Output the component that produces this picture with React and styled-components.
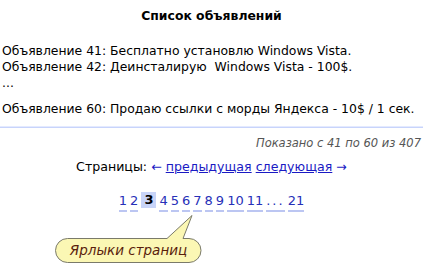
import React from "react";
import styled, { createGlobalStyle } from "styled-components";

const Global = createGlobalStyle`
  html, body { margin: 0; padding: 0; background: #fff; }
  body { font-family: "DejaVu Sans", Verdana, sans-serif; font-size: 12.4px; color: #000; }
`;

const Page = styled.div`
  position: relative;
  width: 423px;
  height: 270px;
  overflow: hidden;
  display: flex;
  flex-direction: column;
`;

const Title = styled.h1`
  margin: 8px 0 0;
  font-size: 12.4px;
  line-height: 16px;
  font-weight: bold;
  text-align: center;
`;

const AdList = styled.div`
  margin-top: 19px;
  padding-left: 2px;
  display: flex;
  flex-direction: column;
`;

const Ad = styled.div`
  line-height: 16px;
  white-space: pre;
  margin-top: ${(p) => (p.$gap ? "10px" : "0")};
`;

const Divider = styled.div`
  margin-top: 9px;
  height: 1px;
  background: #e4eaff;
  border-bottom: 1px solid #c8d4fb;
`;

const Shown = styled.div`
  margin-top: 7px;
  padding-right: 2px;
  text-align: right;
  font-style: italic;
  font-size: 11.5px;
  line-height: 16px;
  color: #555;
`;

const Pager = styled.div`
  margin-top: 8px;
  text-align: center;
  font-size: 12.6px;
  line-height: 16px;
`;

const NavLink = styled.a`
  color: #1a1ac4;
  text-decoration: underline;
`;

const Arrow = styled.span`
  color: #1a1ac4;
`;

const Pages = styled.div`
  margin-top: 18px;
  display: flex;
  justify-content: center;
  gap: 3px;
  font-size: 13px;
  line-height: 16px;
`;

const PageLink = styled.a`
  color: #2730b8;
  text-decoration: none;
  border-bottom: 2px solid #bcc6f2;
  padding-bottom: 1px;
  letter-spacing: ${(p) => (p.$wide ? "2px" : "0")};
`;

const Current = styled.span`
  font-weight: bold;
  background: #c8d4f8;
  padding: 0 3px;
  margin-top: -1px;
  height: 16px;
`;

const Callout = styled.div`
  position: absolute;
  left: 55px;
  top: 215px;
  width: 147px;
  height: 48px;
`;

const CalloutShape = styled.svg`
  position: absolute;
  inset: 0;
`;

const CalloutText = styled.span`
  position: absolute;
  left: 0;
  right: 0;
  top: 23px;
  height: 24px;
  line-height: 24px;
  text-align: center;
  font-style: italic;
  font-size: 13.5px;
  color: #5a1e0c;
`;

const pages = ["1", "2", "3", "4", "5", "6", "7", "8", "9", "10", "11", "...", "21"];

export default function App() {
  return (
    <Page>
      <Global />
      <Title>Список объявлений</Title>
      <AdList>
        <Ad>Объявление 41: Бесплатно установлю Windows Vista.</Ad>
        <Ad>Объявление 42: Деинсталирую  Windows Vista - 100$.</Ad>
        <Ad>...</Ad>
        <Ad $gap>Объявление 60: Продаю ссылки с морды Яндекса - 10$ / 1 сек.</Ad>
      </AdList>
      <Divider />
      <Shown>Показано с 41 по 60 из 407</Shown>
      <Pager>
        Страницы: <Arrow>←</Arrow> <NavLink href="#">предыдущая</NavLink>{" "}
        <NavLink href="#">следующая</NavLink> <Arrow>→</Arrow>
      </Pager>
      <Pages>
        {pages.map((p) =>
          p === "3" ? (
            <Current key={p}>{p}</Current>
          ) : (
            <PageLink key={p} href="#" $wide={p === "..."}>
              {p}
            </PageLink>
          )
        )}
      </Pages>
      <Callout>
        <CalloutShape width="147" height="48" viewBox="0 0 147 48">
          <path
            d="M12.5,23.5 H112 L137,0.5 L128,23.5 H134 A12,12 0 0 1 146,35.5 A12,12 0 0 1 134,47.5 H12.5 A12,12 0 0 1 0.5,35.5 A12,12 0 0 1 12.5,23.5 Z"
            fill="#fbf7b4"
            stroke="#7a7a6a"
            strokeWidth="1"
          />
        </CalloutShape>
        <CalloutText>Ярлыки страниц</CalloutText>
      </Callout>
    </Page>
  );
}
